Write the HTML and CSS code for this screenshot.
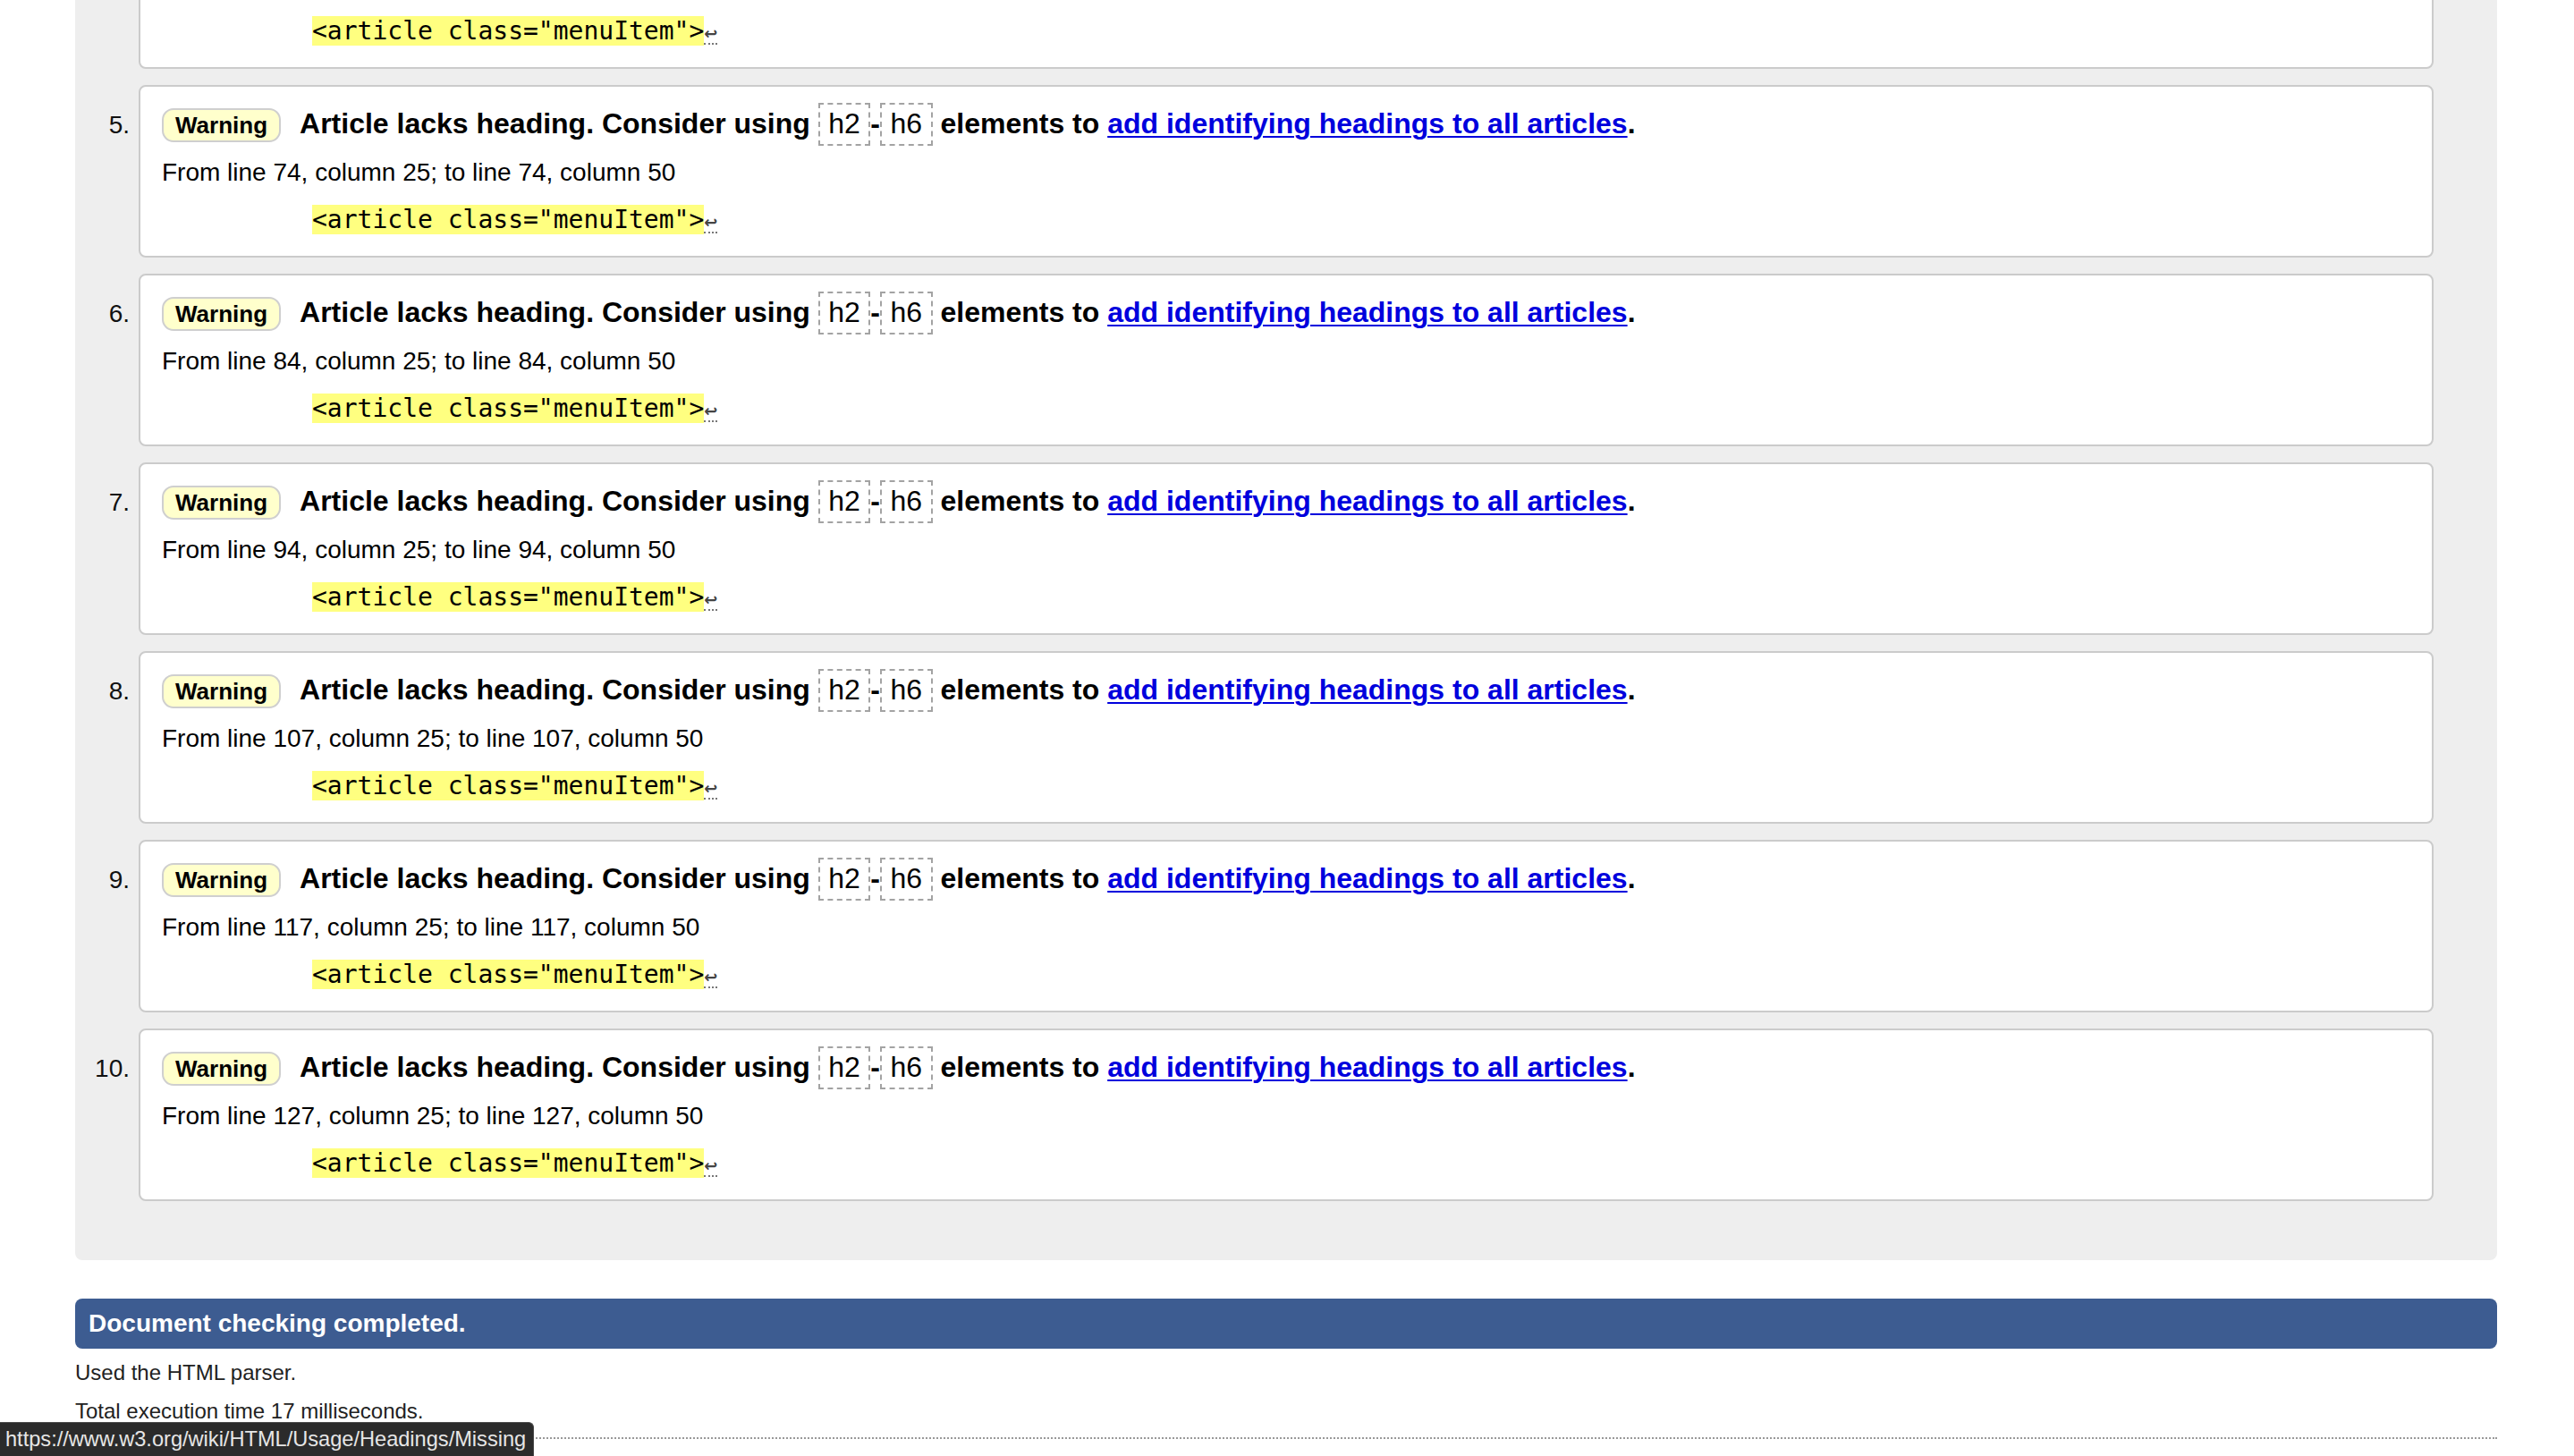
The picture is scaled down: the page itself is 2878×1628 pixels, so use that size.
FILE: index.html
```html
<!DOCTYPE html>
<html lang="en">
<head>
<meta charset="utf-8">
<title>Nu Html Checker</title>
<link rel="stylesheet" href="styles.css">
</head>
<body>
<div class="page">
  <section class="results">
    <ol class="messages">
      <li class="item">
        <span class="num">4.</span>
        <div class="card">
          <p class="message"><span class="badge">Warning</span>Article lacks heading. Consider using <code class="el">h2</code>-<code class="el">h6</code> elements to <a href="#" class="link">add identifying headings to all articles</a>.</p>
          <p class="location">From line 64, column 25; to line 64, column 50</p>
          <p class="extract"><code class="hl">&lt;article class="menuItem"&gt;</code><b class="lf">↩</b></p>
        </div>
      </li>
      <li class="item">
        <span class="num">5.</span>
        <div class="card">
          <p class="message"><span class="badge">Warning</span>Article lacks heading. Consider using <code class="el">h2</code>-<code class="el">h6</code> elements to <a href="#" class="link">add identifying headings to all articles</a>.</p>
          <p class="location">From line 74, column 25; to line 74, column 50</p>
          <p class="extract"><code class="hl">&lt;article class="menuItem"&gt;</code><b class="lf">↩</b></p>
        </div>
      </li>
      <li class="item">
        <span class="num">6.</span>
        <div class="card">
          <p class="message"><span class="badge">Warning</span>Article lacks heading. Consider using <code class="el">h2</code>-<code class="el">h6</code> elements to <a href="#" class="link">add identifying headings to all articles</a>.</p>
          <p class="location">From line 84, column 25; to line 84, column 50</p>
          <p class="extract"><code class="hl">&lt;article class="menuItem"&gt;</code><b class="lf">↩</b></p>
        </div>
      </li>
      <li class="item">
        <span class="num">7.</span>
        <div class="card">
          <p class="message"><span class="badge">Warning</span>Article lacks heading. Consider using <code class="el">h2</code>-<code class="el">h6</code> elements to <a href="#" class="link">add identifying headings to all articles</a>.</p>
          <p class="location">From line 94, column 25; to line 94, column 50</p>
          <p class="extract"><code class="hl">&lt;article class="menuItem"&gt;</code><b class="lf">↩</b></p>
        </div>
      </li>
      <li class="item">
        <span class="num">8.</span>
        <div class="card">
          <p class="message"><span class="badge">Warning</span>Article lacks heading. Consider using <code class="el">h2</code>-<code class="el">h6</code> elements to <a href="#" class="link">add identifying headings to all articles</a>.</p>
          <p class="location">From line 107, column 25; to line 107, column 50</p>
          <p class="extract"><code class="hl">&lt;article class="menuItem"&gt;</code><b class="lf">↩</b></p>
        </div>
      </li>
      <li class="item">
        <span class="num">9.</span>
        <div class="card">
          <p class="message"><span class="badge">Warning</span>Article lacks heading. Consider using <code class="el">h2</code>-<code class="el">h6</code> elements to <a href="#" class="link">add identifying headings to all articles</a>.</p>
          <p class="location">From line 117, column 25; to line 117, column 50</p>
          <p class="extract"><code class="hl">&lt;article class="menuItem"&gt;</code><b class="lf">↩</b></p>
        </div>
      </li>
      <li class="item">
        <span class="num">10.</span>
        <div class="card">
          <p class="message"><span class="badge">Warning</span>Article lacks heading. Consider using <code class="el">h2</code>-<code class="el">h6</code> elements to <a href="#" class="link">add identifying headings to all articles</a>.</p>
          <p class="location">From line 127, column 25; to line 127, column 50</p>
          <p class="extract"><code class="hl">&lt;article class="menuItem"&gt;</code><b class="lf">↩</b></p>
        </div>
      </li>
    </ol>
  </section>
  <p class="done">Document checking completed.</p>
  <p class="info">Used the HTML parser.</p>
  <p class="info">Total execution time 17 milliseconds.</p>
  <footer class="footer"></footer>
</div>
<div class="status">https://www.w3.org/wiki/HTML/Usage/Headings/Missing</div>
</body>
</html>
```

FILE: styles.css
```css
html, body {
  margin: 0;
  padding: 0;
  background: #fff;
}
body {
  font-family: "Liberation Sans", Arial, Helvetica, sans-serif;
  font-size: 28px;
  color: #000;
  overflow: hidden;
}
.page {
  margin: 0 86px 0 84px;
}
.results {
  background: #eee;
  border-radius: 0 0 8px 8px;
  margin-top: -146px;
  padding: 30px 71px 48px 0;
}
.messages {
  list-style: none;
  margin: 0;
  padding: 0;
}
.item {
  display: flex;
  align-items: baseline;
  margin-bottom: 18px;
}
.num {
  flex: 0 0 61px;
  width: 61px;
  padding-right: 10px;
  text-align: right;
  font-size: 28px;
  line-height: 40px;
  color: #111;
}
.card {
  flex: 1 1 auto;
  background: #fff;
  border: 2px solid #cbcbcb;
  border-radius: 8px;
  padding: 17px 20px 20px 24px;
}
.message {
  margin: 0;
  font-size: 32px;
  font-weight: bold;
  line-height: 48px;
  white-space: nowrap;
}
.badge {
  display: inline-block;
  font-size: 26px;
  line-height: 34px;
  padding: 0 13px;
  background: #ffffcc;
  border: 2px solid #cfcfcf;
  border-radius: 13px;
  margin-right: 21px;
}
.el {
  font-family: "Liberation Sans", Arial, Helvetica, sans-serif;
  font-weight: normal;
  font-size: 32px;
  line-height: 32px;
  border: 2px dashed #a3a3a3;
  padding: 3px 9.5px 5px;
}
.link {
  color: #0000dd;
  text-decoration: underline;
  text-decoration-thickness: 2px;
  text-underline-offset: 3px;
}
.location {
  margin: 11px 0 0;
  font-size: 28px;
  line-height: 40px;
}
.extract {
  margin: 13px 0 0;
  padding-left: 168px;
  font-family: "DejaVu Sans Mono", "Liberation Mono", monospace;
  font-size: 28px;
  line-height: 40px;
}
.hl {
  font-family: "DejaVu Sans Mono", "Liberation Mono", monospace;
  font-size: 28px;
  background: #ffff80;
}
.lf {
  font-family: "DejaVu Sans", sans-serif;
  font-weight: bold;
  font-size: 18px;
  line-height: 18px;
  color: #444;
  border-bottom: 2px dotted #777;
}
.done {
  margin: 43px 0 0;
  height: 56px;
  line-height: 56px;
  padding: 0 15px;
  background: #3d5c91;
  color: #fff;
  font-weight: bold;
  font-size: 28px;
  border-radius: 8px;
}
.info {
  margin: 0;
  font-size: 24px;
  line-height: 43px;
  color: #222;
}
.done + .info {
  margin-top: 5px;
}
.footer {
  margin-top: 8px;
  border-top: 2px dotted #999;
  height: 40px;
}
.status {
  position: fixed;
  left: 0;
  bottom: 0;
  height: 37px;
  line-height: 37px;
  padding: 0 8px 0 6px;
  font-size: 23.6px;
  color: #e6e6e6;
  background: #2b2b2b;
  border-top: 1px solid #4a4a4a;
  border-right: 1px solid #4a4a4a;
  border-top-right-radius: 6px;
}
```
